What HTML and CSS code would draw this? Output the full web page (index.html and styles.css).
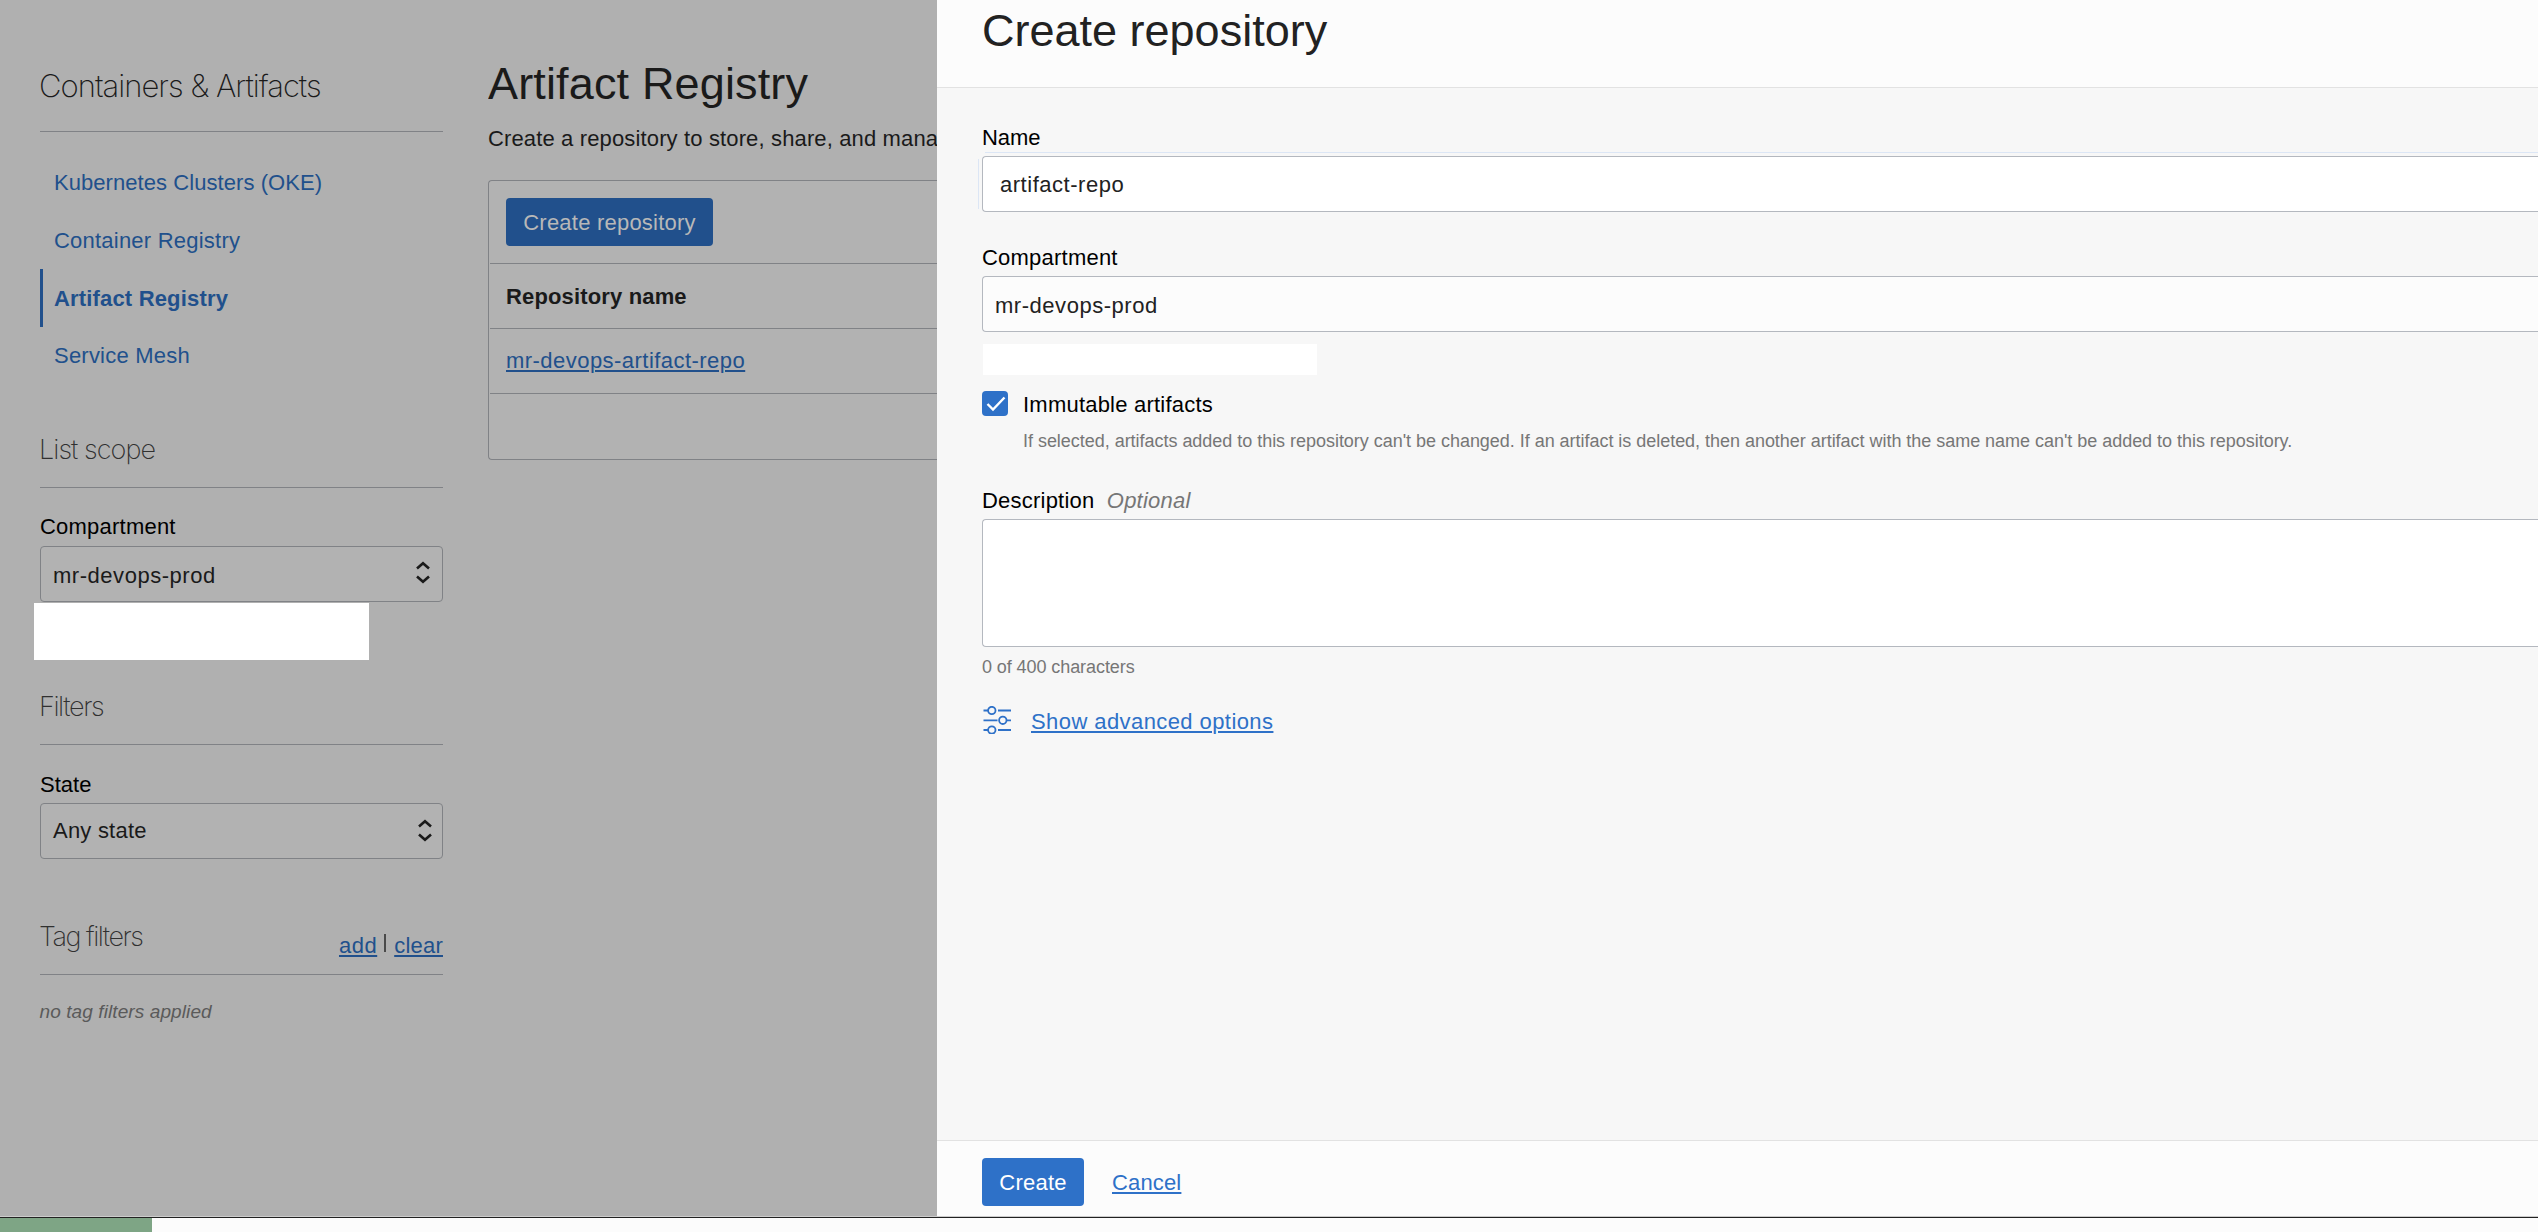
FILE: index.html
```html
<!DOCTYPE html>
<html lang="en">
<head>
<meta charset="utf-8">
<title>Artifact Registry</title>
<link rel="stylesheet" href="styles.css">
</head>
<body>
<div class="stage">
  <aside class="sidebar">
    <h2 class="side-title">Containers &amp; Artifacts</h2>
    <nav class="nav">
      <a class="nav-item tight">Kubernetes Clusters (OKE)</a>
      <a class="nav-item">Container Registry</a>
      <a class="nav-item active">Artifact Registry</a>
      <a class="nav-item last">Service Mesh</a>
    </nav>
    <h3 class="section-title scope">List scope</h3>
    <label class="label side-label">Compartment</label>
    <div class="select side-select low"><span class="wide">mr-devops-prod</span>
      <svg class="chevrons inset" width="16" height="26" viewBox="0 0 16 26"><path d="M2 9.500 8 4.200 14 9.500M2 17.500 8 22.800 14 17.500"/></svg>
    </div>
    <div class="blank side-blank"></div>
    <h3 class="section-title filters">Filters</h3>
    <label class="label side-label state-label">State</label>
    <div class="select side-select state"><span>Any state</span>
      <svg class="chevrons" width="16" height="26" viewBox="0 0 16 26"><path d="M2 9.500 8 4.200 14 9.500M2 17.500 8 22.800 14 17.500"/></svg>
    </div>
    <div class="tag-head">
      <h3 class="section-title tag">Tag filters</h3>
      <div class="tag-actions"><a class="link add">add</a><i class="bar"></i><a class="link">clear</a></div>
    </div>
    <p class="none">no tag filters applied</p>
  </aside>
  <main class="main">
    <h1 class="title">Artifact Registry</h1>
    <p class="intro">Create a repository to store, share, and mana</p>
    <div class="panel">
      <div class="toolbar"><button class="btn btn-dim">Create repository</button></div>
      <div class="row head">Repository name</div>
      <div class="row item"><a class="link wide">mr-devops-artifact-repo</a></div>
      <div class="foot"></div>
    </div>
  </main>
  <section class="drawer">
    <header class="drawer-head"><h1 class="title">Create repository</h1></header>
    <div class="drawer-body">
      <label class="label name">Name</label>
      <div class="input"><span class="wide">artifact-repo</span></div>
      <label class="label comp">Compartment</label>
      <div class="select comp-select low"><span class="wide">mr-devops-prod</span></div>
      <div class="blank comp-blank"></div>
      <div class="check-row">
        <svg class="check" width="26" height="25" viewBox="0 0 26 25"><rect width="26" height="25" rx="4"/><path d="M5.500 13 11 18.500 22.500 6.500"/></svg>
        <div>
          <div class="label">Immutable artifacts</div>
          <p class="hint">If selected, artifacts added to this repository can't be changed. If an artifact is deleted, then another artifact with the same name can't be added to this repository.</p>
        </div>
      </div>
      <label class="label desc">Description <em class="optional">Optional</em></label>
      <div class="textarea"></div>
      <p class="hint counter">0 of 400 characters</p>
      <div class="advanced">
        <svg class="sliders" width="29" height="28" viewBox="0 0 29 28"><path d="M1.500 4.500H6M16 4.500H29M1.500 14.300H15.500M25 14.300H29M1.500 24H6M16 24H29"/><circle cx="9.800" cy="4.500" r="3.700"/><circle cx="20.800" cy="14.300" r="3.700"/><circle cx="9.800" cy="24" r="3.700"/></svg>
        <a class="link options">Show advanced options</a>
      </div>
    </div>
    <footer class="drawer-foot"><button class="btn btn-create">Create</button><a class="link cancel">Cancel</a></footer>
  </section>
</div>
<div class="strip"><div class="strip-mark"></div></div>
</body>
</html>
```
FILE: styles.css
```css
* { box-sizing: border-box; margin: 0; padding: 0; }
body {
  height: 1232px;
  overflow: hidden;
  display: flex;
  flex-direction: column;
  background: #fcfcfc;
  color: #1a1a1a;
  font: 22px/27px "Liberation Sans", Arial, sans-serif;
  letter-spacing: 0.22px;
}
.stage { display: flex; height: 1216px; background: #b0b0b0; }
.wide { letter-spacing: 0.53px; }

/* Sidebar */
.sidebar { width: 488px; flex: none; padding: 66px 45px 0 40px; }
.side-title, .section-title {
  font-family: Inter, sans-serif;
  font-weight: 200;
  white-space: nowrap;
  border-bottom: 1px solid #808286;
}
.side-title { height: 66px; font-size: 31px; line-height: 40px; letter-spacing: -0.97px; text-indent: -1px; }
.section-title { height: 56px; padding-top: 1px; font-size: 27px; line-height: 34px; letter-spacing: -0.95px; text-indent: -1px; color: #303030; }
.scope { margin-top: 48px; }
.filters { margin-top: 29px; letter-spacing: -1.4px; }
.nav { margin-top: 21px; }
.nav-item { display: block; height: 58px; padding: 16px 0 0 14px; color: #21508c; }
.nav-item.tight { letter-spacing: 0.06px; }
.nav-item.active { padding-left: 11px; border-left: 3px solid #21508c; font-weight: bold; letter-spacing: 0.17px; }
.nav-item.last { height: 57px; padding-top: 15px; }
.label { display: block; color: #000; }
.side-label { margin-top: 25px; }
.state-label { margin-top: 26px; letter-spacing: 0; }
.select {
  display: flex;
  justify-content: space-between;
  height: 56px;
  padding: 13px 9px 0 12px;
  border: 1px solid #b4b8bf;
  border-radius: 4px;
}
.low { padding-top: 15px; }
.side-select { margin-top: 6px; border-color: #808286; background: #b2b2b2; }
.state { margin-top: 5px; }
.chevrons { fill: none; stroke: #1a1a1a; stroke-width: 2.6; }
.inset { margin: -3px 2px 0 0; }
.blank { background: #fff; }
.side-blank { width: 335px; height: 57px; margin: 1px 0 0 -6px; }
.tag-head { display: flex; height: 56px; margin-top: 60px; border-bottom: 1px solid #808286; justify-content: space-between; }
.tag { border: 0; letter-spacing: -1.5px; }
.tag-actions { display: flex; padding-top: 13px; }
.add { letter-spacing: 0.5px; }
.bar { width: 2px; height: 18px; margin: 2px 8px 0 7px; background: #4a4a4a; }
.link { color: #21508c; text-decoration: underline 2px; text-underline-offset: 2px; }
.none { margin-top: 25px; font-size: 19px; line-height: 24px; font-style: italic; color: #5a5a5a; letter-spacing: 0.1px; text-indent: -0.5px; }

/* Main column, beside the drawer */
.main { width: 449px; flex: none; overflow: hidden; padding-top: 58px; }
.title { font-size: 45px; line-height: 52px; font-weight: normal; white-space: nowrap; letter-spacing: 0.15px; }
.intro { margin-top: 15px; white-space: nowrap; letter-spacing: 0.14px; }
.panel { height: 280px; margin-top: 28px; border: 1px solid #808286; border-right: 0; border-radius: 4px 0 0 4px; background: #b2b2b2; }
.toolbar, .row { margin-left: 1px; border-bottom: 1px solid #808286; }
.toolbar { height: 83px; padding: 17px 16px; }
.row { height: 65px; padding: 18px 0 0 16px; }
.row.head { padding-top: 19px; font-weight: bold; letter-spacing: 0.15px; }
.row.item .link { letter-spacing: 0.46px; }
.btn { display: block; height: 48px; border: 0; border-radius: 4px; font: inherit; letter-spacing: inherit; text-align: center; color: #fff; background: #2e71c8; }
.btn-dim { width: 207px; color: #b8b8b8; background: #21508c; }

/* Drawer */
.drawer { flex: 1; min-width: 0; display: flex; flex-direction: column; background: #f7f7f7; }
.drawer-head { height: 88px; padding: 5px 0 0 45px; background: #fcfcfc; border-bottom: 1px solid #e2e2e2; color: #222; }
.drawer-head .title { letter-spacing: 0; }
.drawer-body { flex: 1; padding: 36px 0 0 45px; }
.drawer-body .select, .input, .textarea { border: 1px solid #b4b8bf; border-right: 0; border-radius: 4px 0 0 4px; }
.name { letter-spacing: -0.1px; }
.input { position: relative; height: 56px; margin-top: 5px; padding: 14px 0 0 17px; background: #fff; color: #222; }
.input::before { content: ""; position: absolute; left: 2px; right: 0; top: -5px; height: 1px; background: #dce6f5; }
.input::after { content: ""; position: absolute; left: -5px; top: 2px; width: 1px; height: 50px; background: #dce6f5; }
.comp { margin-top: 32px; }
.comp-select { margin-top: 5px; background: #fcfcfc; color: #222; }
.comp-blank { width: 334px; height: 31px; margin: 12px 0 0 1px; }
.check-row { display: flex; gap: 15px; margin-top: 16px; }
.check { flex: none; fill: #2e71c8; }
.check path { fill: none; stroke: #fff; stroke-width: 2.4; }
.hint { font-size: 18px; line-height: 22px; color: #767676; letter-spacing: -0.03px; }
.check-row .hint { margin: 12px 0 1px; white-space: nowrap; }
.desc { margin-top: 34px; }
.optional { margin-left: 6px; color: #767676; }
.textarea { height: 128px; margin-top: 5px; background: #fff; }
.hint.counter { margin-top: 9px; letter-spacing: -0.08px; }
.advanced { display: flex; gap: 20px; margin-top: 28px; }
.advanced .link { margin-top: 2px; }
.options { letter-spacing: 0.42px; }
.sliders { fill: none; stroke: #2e71c8; stroke-width: 1.8; }
.drawer .link { color: #2e71c8; }
.drawer-foot { display: flex; height: 76px; padding: 17px 0 0 45px; background: #fcfcfc; border-top: 1px solid #e2e2e2; }
.btn-create { width: 102px; }
.cancel { margin: 11px 0 0 28px; letter-spacing: 0.15px; }

/* Bottom strip */
.strip { height: 16px; border-top: 1px solid #ccc; }
.strip::before { content: ""; display: block; height: 1px; background: #222; }
.strip-mark { width: 152px; height: 14px; background: #7ea585; }
```
